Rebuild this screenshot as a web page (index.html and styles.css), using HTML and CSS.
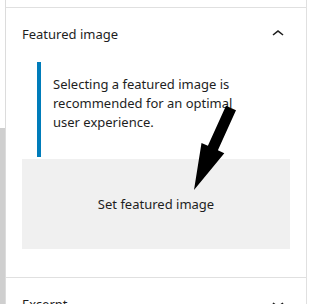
FILE: index.html
```html
<!DOCTYPE html>
<html lang="en">
<head>
<meta charset="utf-8">
<title>Featured image panel</title>
<link rel="stylesheet" href="styles.css">
</head>
<body>
<div class="frame">
  <div class="gutter">
    <div class="gutter-blank"></div>
    <div class="gutter-thumb"></div>
  </div>
  <aside class="sidebar">
    <div class="panel-prev"></div>
    <section class="panel is-open">
      <button class="panel-toggle" type="button">
        <span class="panel-title">Featured image</span>
        <svg class="chevron" viewBox="0 0 24 24" width="24" height="24" aria-hidden="true"><path d="M6.5 12.4L12 8l5.5 4.4-.9 1.2L12 10l-4.5 3.6-1-1.2z"/></svg>
      </button>
      <div class="panel-body">
        <div class="notice">
          <p class="notice-text">Selecting a featured image is recommended for an optimal user experience.</p>
        </div>
        <button class="set-image" type="button">Set featured image</button>
      </div>
    </section>
    <section class="panel">
      <button class="panel-toggle" type="button">
        <span class="panel-title">Excerpt</span>
        <svg class="chevron" viewBox="0 0 24 24" width="24" height="24" aria-hidden="true"><path d="M17.5 11.6L12 16l-5.5-4.4.9-1.2L12 14l4.5-3.6 1 1.2z"/></svg>
      </button>
    </section>
  </aside>
</div>
<svg class="arrow" viewBox="0 0 309 304" width="309" height="304" aria-hidden="true">
  <polygon points="226,105.7 236,110.3 217.9,150.3 224.3,153.2 194,190 201.5,142.9 207.9,145.8"/>
</svg>
</body>
</html>
```

FILE: styles.css
```css
html, body {
  margin: 0;
  padding: 0;
  background: #fff;
}

body {
  width: 309px;
  height: 304px;
  overflow: hidden;
  position: relative;
  font-family: "Noto Sans", "Open Sans", sans-serif;
  font-size: 13px;
  line-height: 20px;
  color: #1e1e1e;
}

.frame {
  display: flex;
  align-items: stretch;
  height: 304px;
  overflow: hidden;
}

.gutter {
  width: 5px;
  flex-shrink: 0;
  display: flex;
  flex-direction: column;
}

.gutter-blank {
  height: 128px;
  flex-shrink: 0;
  background: #fff;
}

.gutter-thumb {
  flex: 1;
  background: #cfcfcf;
}

.sidebar {
  width: 300px;
  flex-shrink: 0;
  border-left: 1px solid #dcdcdc;
  border-right: 1px solid #e0e0e0;
  display: flex;
  flex-direction: column;
}

.sidebar > * {
  flex-shrink: 0;
}

.panel-prev {
  height: 7px;
  border-bottom: 1px solid #e0e0e0;
}

.panel {
  border-bottom: 1px solid #e0e0e0;
}

.panel-toggle {
  display: flex;
  align-items: center;
  justify-content: space-between;
  width: 100%;
  padding: 16px;
  margin: 0;
  border: 0;
  background: transparent;
  font: inherit;
  color: #1e1e1e;
  text-align: left;
  height: 52px;
  box-sizing: border-box;
}

.panel-title {
  font-size: 13px;
  line-height: 20px;
}

.chevron {
  display: block;
  fill: #1e1e1e;
}

.panel-body {
  padding: 2px 16px 28px 16px;
  display: flex;
  flex-direction: column;
  gap: 2px;
}

.notice {
  margin-left: 15px;
  border-left: 4px solid #007cba;
  padding: 13px 12px 25px 12px;
}

.notice-text {
  margin: 0;
  width: 200px;
  font-size: 13px;
  line-height: 19px;
}

.set-image {
  height: 90px;
  margin: 0;
  border: 0;
  background: #f0f0f0;
  font: inherit;
  font-size: 13px;
  color: #1e1e1e;
  display: flex;
  align-items: center;
  justify-content: center;
}

.arrow {
  position: absolute;
  left: 0;
  top: 0;
  fill: #000;
}
```
